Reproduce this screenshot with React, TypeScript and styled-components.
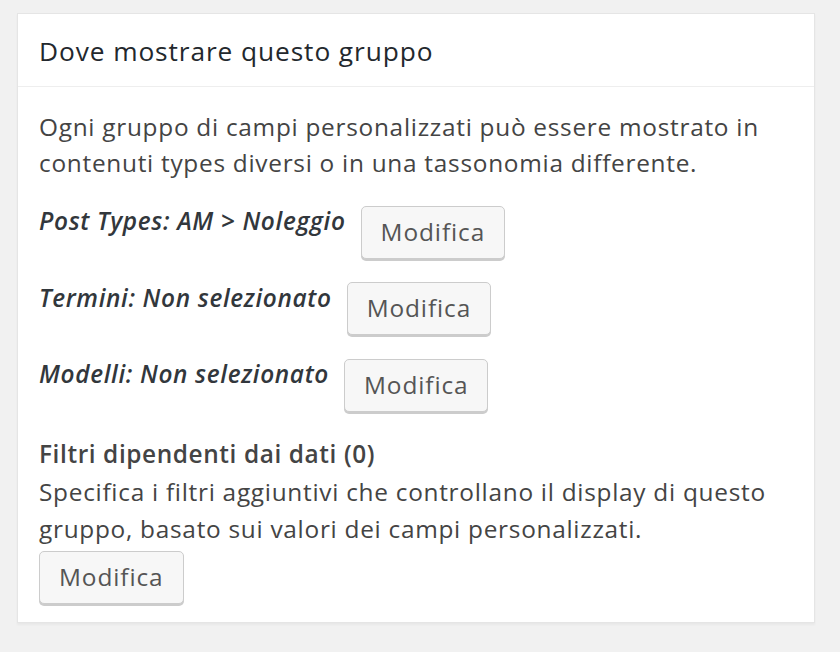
import React from "react";
import styled, { createGlobalStyle } from "styled-components";

const GlobalStyle = createGlobalStyle`
  html, body {
    margin: 0;
    padding: 0;
    background: #f1f1f1;
  }
  body {
    font-family: "Open Sans", "Noto Sans", "Liberation Sans", sans-serif;
    color: #444;
  }
  * { box-sizing: border-box; }
`;

const Page = styled.div`
  width: 840px;
  height: 652px;
  padding: 13px 25px 0 17px;
  background: #f1f1f1;
`;

const Postbox = styled.section`
  width: 798px;
  background: #fff;
  border: 1px solid #e5e5e5;
  box-shadow: 0 2px 2px rgba(0, 0, 0, 0.04);
`;

const PostboxTitle = styled.h2`
  margin: 0;
  padding: 18.5px 21px 16.5px;
  font-size: 26.3px;
  line-height: 1.4;
  font-weight: 400;
  letter-spacing: 0.9px;
  color: #23282d;
  border-bottom: 1px solid #eee;
`;

const Inside = styled.div`
  padding: 22px 21px 18px 21px;
  font-size: 24.4px;
  line-height: 36.6px;
  letter-spacing: 0.72px;
  color: #444;
`;

const Description = styled.p`
  margin: 0 0 21px;
`;

const SettingRow = styled.div<{ $last?: boolean }>`
  display: flex;
  align-items: flex-start;
  gap: 15px;
  margin-bottom: ${(p) => (p.$last ? "24px" : "21px")};
`;

const SettingLabel = styled.em`
  font-style: italic;
  font-weight: 600;
  letter-spacing: 0.65px;
  color: #32373c;
  white-space: nowrap;
`;

const Button = styled.button<{ $offset?: number }>`
  display: inline-block;
  margin-top: ${(p) => p.$offset ?? 0}px;
  height: 53px;
  padding: 0 19px 2px;
  font-family: inherit;
  font-size: 24.4px;
  letter-spacing: 0.9px;
  line-height: 49px;
  color: #555;
  background: #f7f7f7;
  border: 1px solid #ccc;
  border-radius: 5px;
  box-shadow: 0 2px 0 #ccc;
  cursor: pointer;
  white-space: nowrap;
`;

const FilterTitle = styled.strong`
  display: block;
  font-weight: 600;
  letter-spacing: 0.6px;
  color: #444;
`;

const FilterText = styled.p`
  margin: 2px 0 4px;
`;

const rows = [
  "Post Types: AM > Noleggio",
  "Termini: Non selezionato",
  "Modelli: Non selezionato",
];

export default function App() {
  return (
    <>
      <GlobalStyle />
      <Page>
        <Postbox>
          <PostboxTitle>Dove mostrare questo gruppo</PostboxTitle>
          <Inside>
            <Description>
              Ogni gruppo di campi personalizzati può essere mostrato in
              contenuti types diversi o in una tassonomia differente.
            </Description>
            {rows.map((label, i) => (
              <SettingRow key={label} $last={i === rows.length - 1}>
                <SettingLabel>{label}</SettingLabel>
                <Button $offset={2.5}>Modifica</Button>
              </SettingRow>
            ))}
            <FilterTitle>Filtri dipendenti dai dati (0)</FilterTitle>
            <FilterText>
              Specifica i filtri aggiuntivi che controllano il display di
              questo gruppo, basato sui valori dei campi personalizzati.
            </FilterText>
            <Button>Modifica</Button>
          </Inside>
        </Postbox>
      </Page>
    </>
  );
}
